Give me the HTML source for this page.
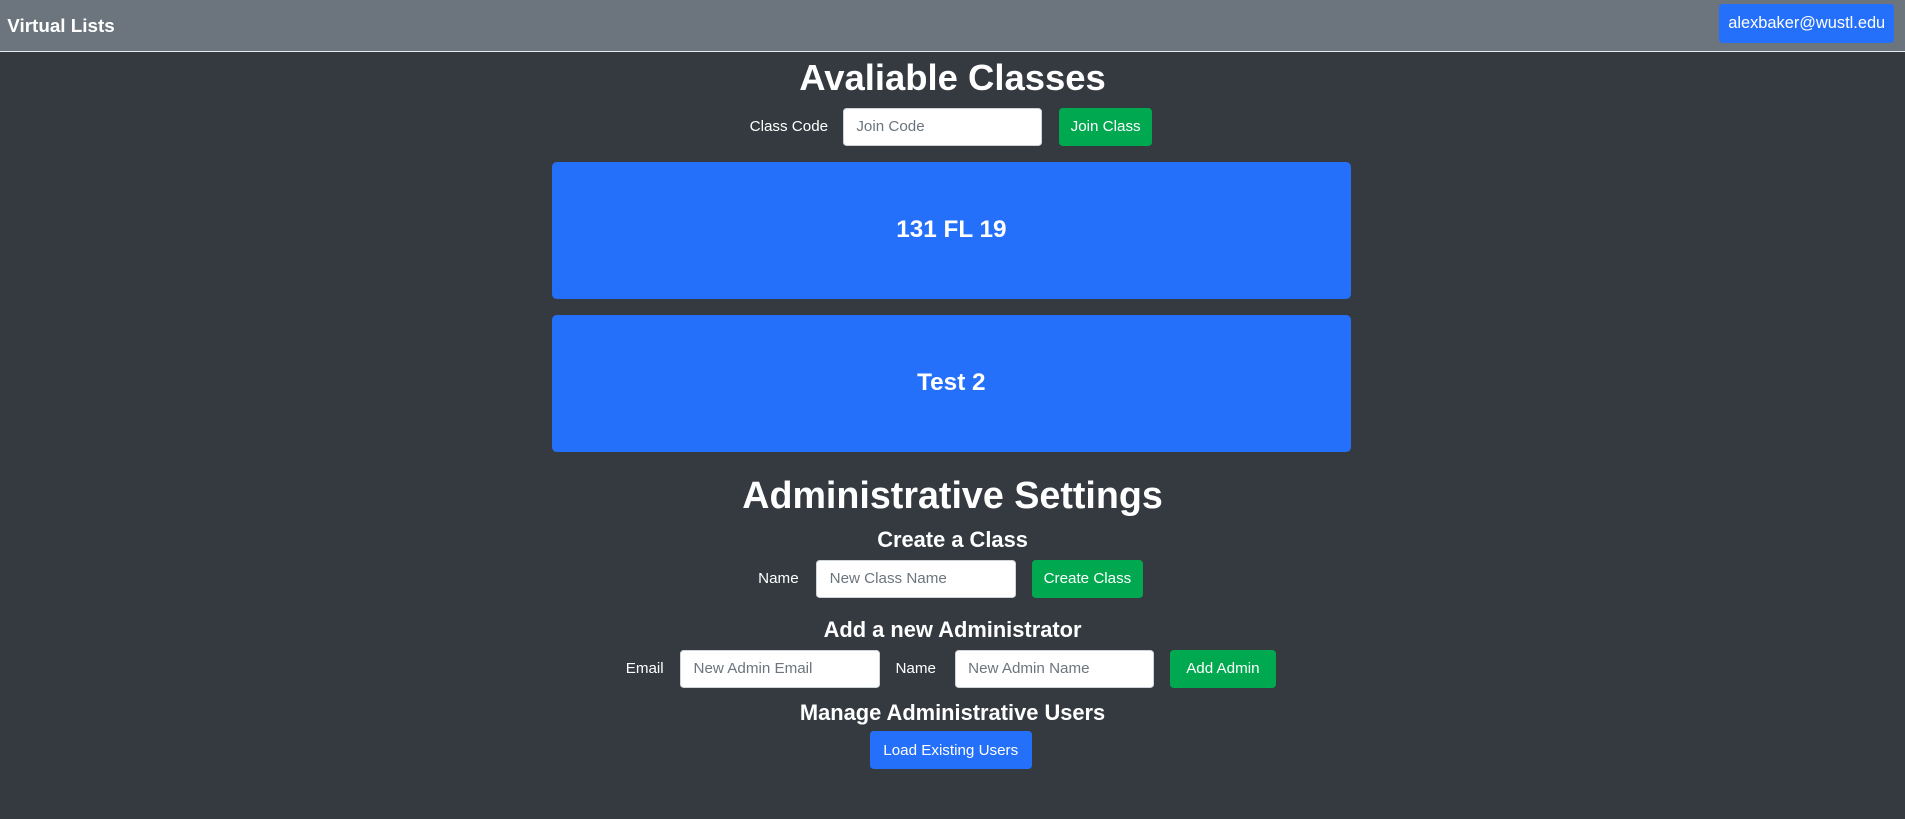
<!DOCTYPE html>
<html><head><style>
html,body{margin:0;padding:0;}
body{width:1905px;height:819px;overflow:hidden;background:#343a40;font-family:"Liberation Sans",sans-serif;color:#fff;}
#w{zoom:1.215;width:1568px;height:674px;position:relative;}
.a{position:absolute;}
.nav{left:0;top:0;width:1568px;height:42px;background:#6c757d;border-bottom:1px solid #e9ecef;}
.c{left:0;width:1568px;text-align:center;white-space:nowrap;}
.btn{position:absolute;color:#fff;border-radius:3px;font-size:12.5px;display:flex;align-items:center;justify-content:center;}
.g{background:#00a84f;}
.b{background:#2570fa;}
.in{position:absolute;background:#fff;border:1px solid #ced4da;border-radius:3px;box-sizing:border-box;color:#6c757d;font-size:12.5px;padding-left:10px;display:flex;align-items:center;}
.lbl{position:absolute;font-size:12.5px;}
.card{position:absolute;left:454px;width:658px;height:113px;background:#2570fa;border-radius:4px;display:flex;align-items:center;justify-content:center;font-weight:bold;font-size:20px;}
</style></head><body><div id="w">
<div class="a nav"></div>
<div class="a" style="left:6px;top:12px;font-size:15.5px;font-weight:bold;">Virtual Lists</div>
<div class="btn b" style="left:1415px;top:3px;width:144px;height:32px;font-size:13.5px;">alexbaker@wustl.edu</div>
<div class="a c" style="top:47px;font-size:30px;font-weight:bold;">Avaliable Classes</div>
<div class="lbl" style="left:617px;top:97px;">Class Code</div>
<div class="in" style="left:694px;top:89px;width:164px;height:31px;">Join Code</div>
<div class="btn g" style="left:872px;top:89px;width:76px;height:31px;">Join Class</div>
<div class="card" style="top:133px;">131 FL 19</div>
<div class="card" style="top:259px;">Test 2</div>
<div class="a c" style="top:390px;font-size:31px;font-weight:bold;">Administrative Settings</div>
<div class="a c" style="top:434px;font-size:18px;font-weight:bold;">Create a Class</div>
<div class="lbl" style="left:624px;top:469px;">Name</div>
<div class="in" style="left:672px;top:461px;width:164px;height:31px;">New Class Name</div>
<div class="btn g" style="left:849px;top:461px;width:92px;height:31px;">Create Class</div>
<div class="a c" style="top:508px;font-size:18px;font-weight:bold;">Add a new Administrator</div>
<div class="lbl" style="left:515px;top:543px;">Email</div>
<div class="in" style="left:560px;top:535px;width:164px;height:31px;">New Admin Email</div>
<div class="lbl" style="left:737px;top:543px;">Name</div>
<div class="in" style="left:786px;top:535px;width:164px;height:31px;">New Admin Name</div>
<div class="btn g" style="left:963px;top:535px;width:87px;height:31px;">Add Admin</div>
<div class="a c" style="top:576px;font-size:18px;font-weight:bold;">Manage Administrative Users</div>
<div class="btn b" style="left:716px;top:602px;width:133px;height:31px;">Load Existing Users</div>
</div></body></html>
